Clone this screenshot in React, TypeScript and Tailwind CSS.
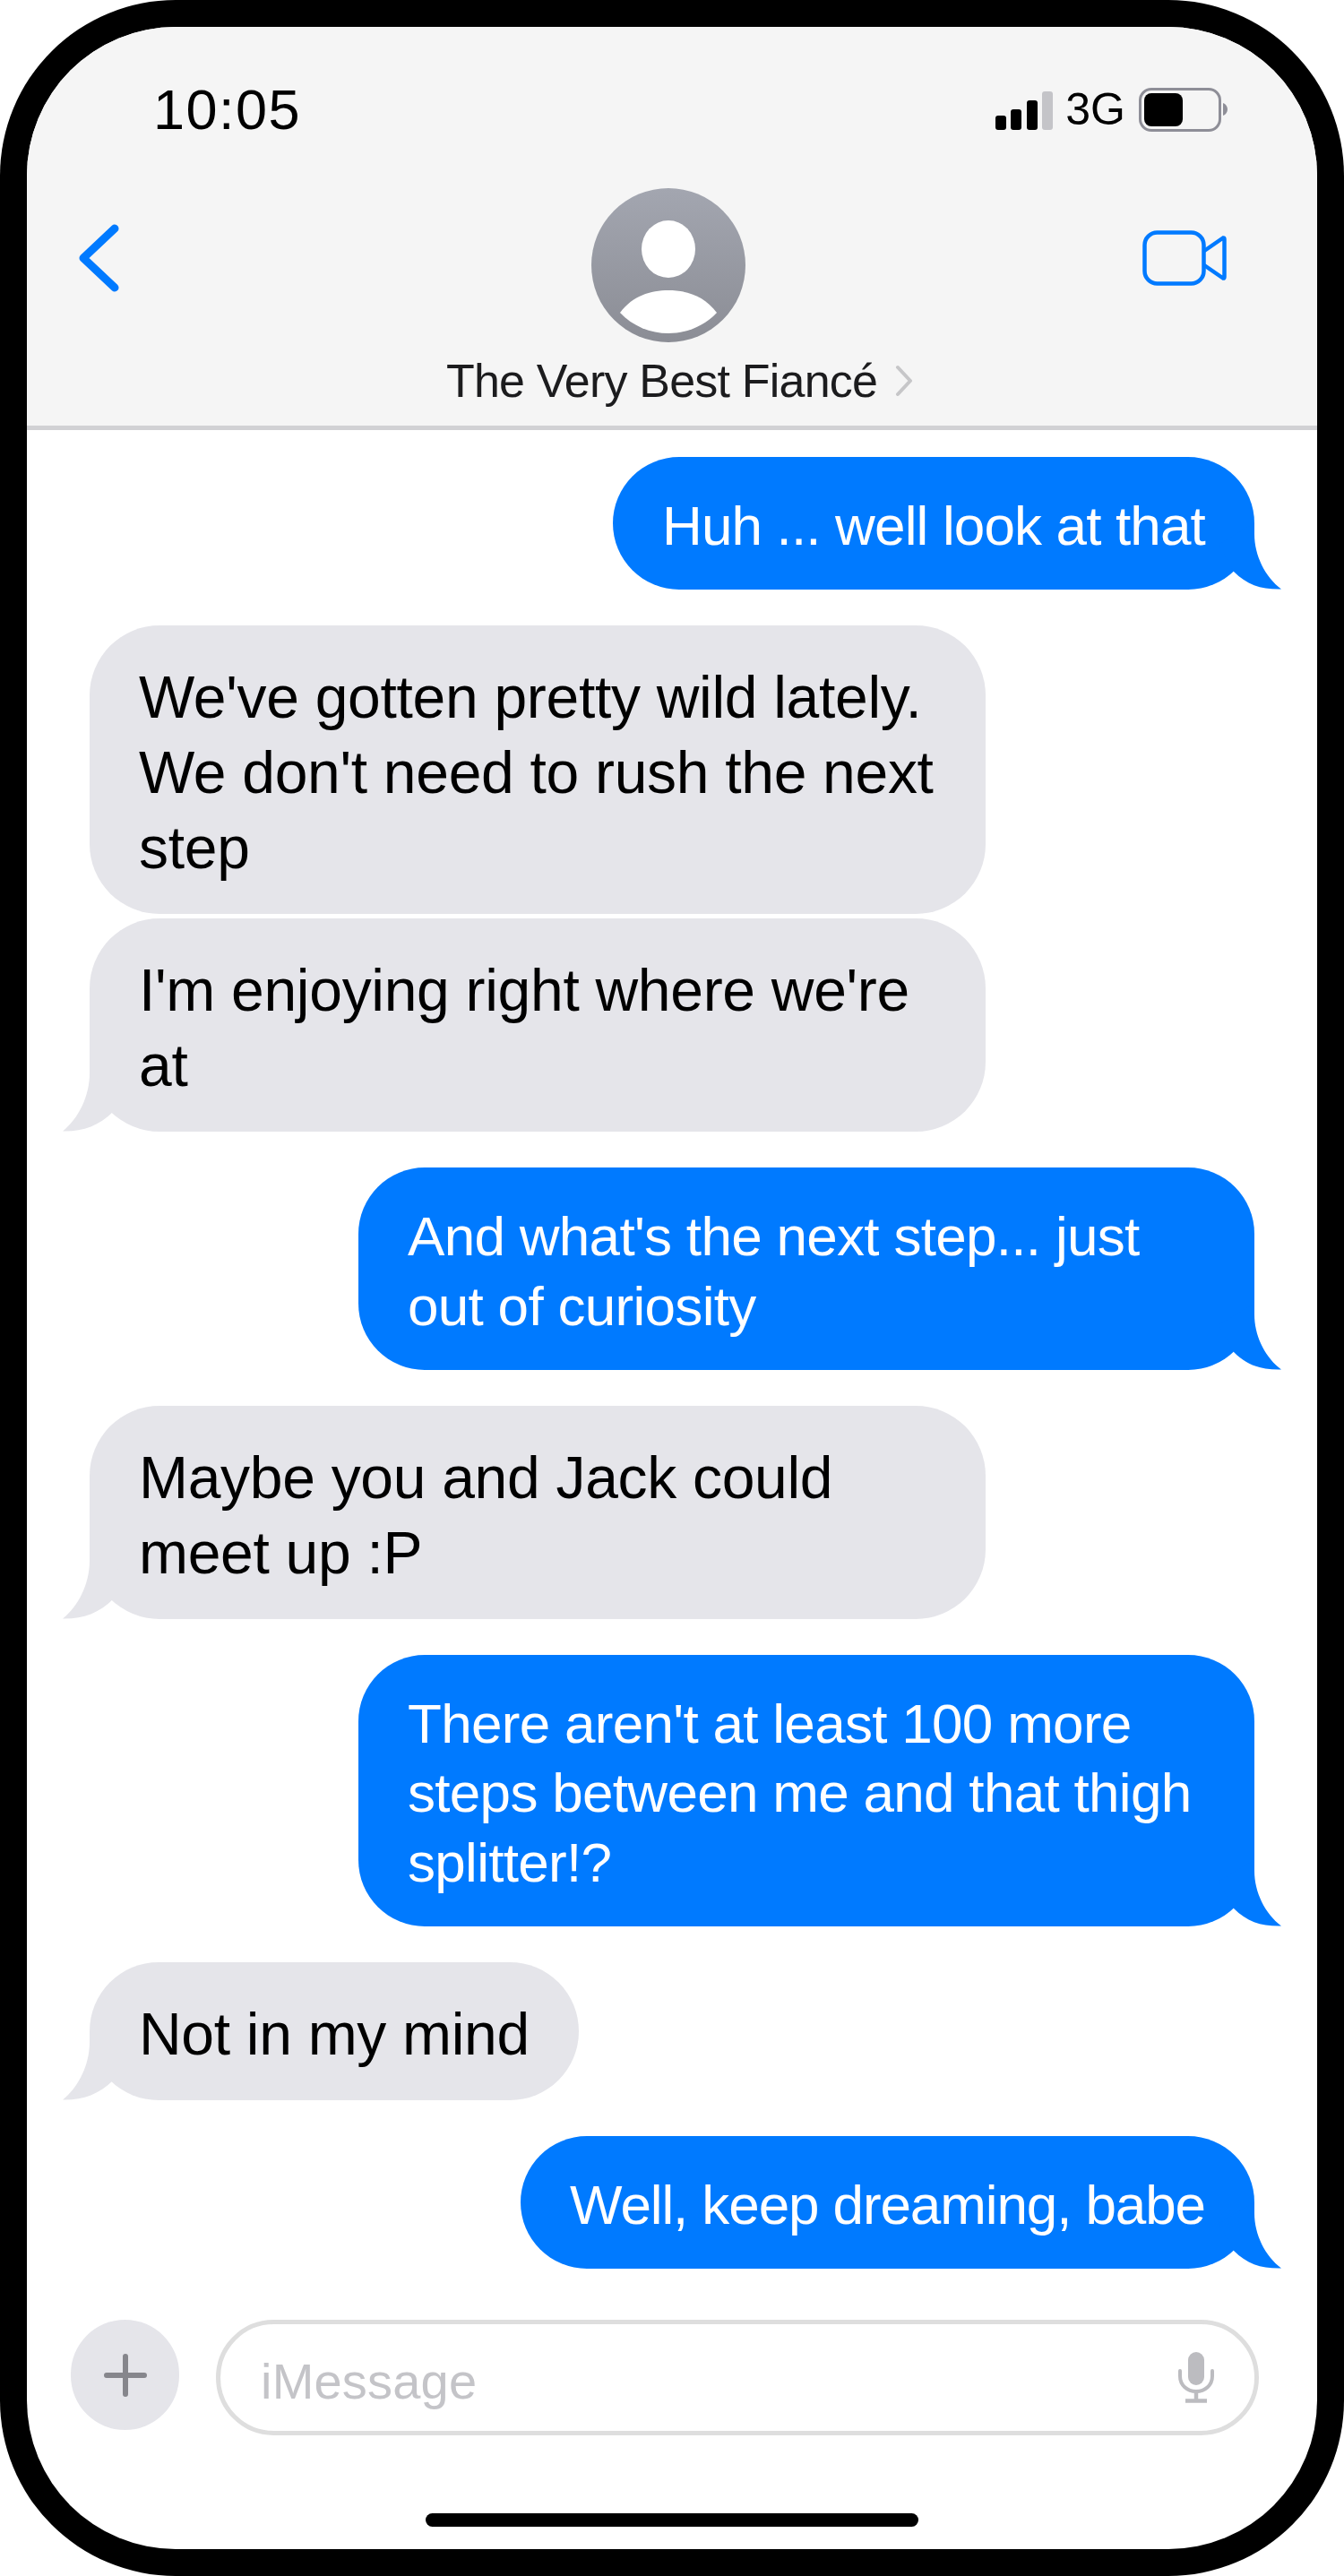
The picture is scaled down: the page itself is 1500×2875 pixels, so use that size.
import React from 'react';

interface BubbleProps {
    text: string;
    tail?: boolean;
    tracking?: string;
}

const SentBubble = ({ text, tracking = 'tracking-[-0.7px]' }: BubbleProps) => (
    <div className={`relative self-end w-fit max-w-[1000px] rounded-[74px] bg-[#007aff] px-[55px] pt-[38px] pb-[32.5px] text-[62px] leading-[77.5px] text-white ${tracking}`}>
        {text}
        <svg className="absolute bottom-0 right-[-30px]" width="80" height="90" viewBox="0 0 80 90">
            <path d="M50 16 L50 28 C50 52 62 76 80 89.5 C58 90 42 85 27 70 L10 40 Z" fill="#007aff" />
        </svg>
    </div>
);

const ReceivedBubble = ({ text, tail = true }: BubbleProps) => (
    <div className="relative w-fit max-w-[1000px] rounded-[78px] bg-[#e5e5ea] px-[55px] pt-[38px] pb-[32px] text-[66px] leading-[84px] tracking-[-0.3px] text-black">
        {text}
        {tail && (
            <svg className="absolute bottom-0 left-[-30px]" width="80" height="90" viewBox="0 0 80 90">
                <path d="M30 12 L30 25 C30 50 18 75 0 89.5 C22 90 40 84 57 67 L70 40 Z" fill="#e5e5ea" />
            </svg>
        )}
    </div>
);

const StatusIcons = () => (
    <div className="flex items-center">
        <div className="flex items-end gap-[5.5px] pt-[2px]">
            <span className="h-[16px] w-[12px] rounded-[3px] bg-black" />
            <span className="h-[23px] w-[12px] rounded-[3px] bg-black" />
            <span className="h-[33px] w-[12px] rounded-[3px] bg-black" />
            <span className="h-[43px] w-[12px] rounded-[3px] bg-[#c4c4c8]" />
        </div>
        <span className="ml-[14px] text-[50px] leading-[60px] text-black">3G</span>
        <div className="ml-[15px] flex h-[49px] w-[92px] rounded-[14px] border-[3px] border-[#8e8e97] p-[3px]">
            <span className="h-full w-[43px] rounded-[8px] bg-black" />
        </div>
        <svg className="ml-[2px]" width="5" height="14" viewBox="0 0 5 14">
            <path d="M0 0 C3 1 5 4 5 7 C5 10 3 13 0 14 Z" fill="#8e8e97" />
        </svg>
    </div>
);

const Avatar = () => (
    <svg width="172" height="172" viewBox="0 0 172 172">
        <defs>
            <linearGradient id="avatar-bg" x1="0" y1="0" x2="0" y2="1">
                <stop offset="0" stopColor="#a3a6b0" />
                <stop offset="1" stopColor="#8b8d95" />
            </linearGradient>
        </defs>
        <circle cx="86" cy="86" r="86" fill="url(#avatar-bg)" />
        <ellipse cx="86" cy="68" rx="30" ry="32" fill="#fff" />
        <path d="M32 139 C46 120 66 114 86 114 C106 114 126 120 140 139 C126 154 106 162 86 162 C66 162 46 154 32 139 Z" fill="#fff" />
    </svg>
);

export default function App() {
    return (
        <div className="h-[2875px] w-[1500px] bg-white [font-family:'Liberation_Sans',sans-serif]">
            <div className="h-full rounded-[196px] bg-black p-[30px]">
                <div className="flex h-full flex-col overflow-hidden rounded-[166px] bg-white">
                    {/* Header */}
                    <header className="h-[450px] shrink-0 border-b-[5px] border-[#d1d1d4] bg-[#f5f5f5]">
                        <div className="mt-[62px] flex h-[60px] items-center justify-between pl-[141px] pr-[100px]">
                            <span className="text-[63px] leading-[60px] tracking-[1.5px] text-black">10:05</span>
                            <StatusIcons />
                        </div>
                        <div className="mt-[58px] flex items-start pl-[58px] pr-[101px]">
                            <svg className="mt-[40px]" width="45" height="76" viewBox="0 0 45 76" fill="none" stroke="#007aff" strokeWidth="9" strokeLinecap="round" strokeLinejoin="round">
                                <path d="M40 5 L5 38 L40 71" />
                            </svg>
                            <div className="ml-[365px] flex w-[520px] flex-col">
                                <div className="ml-[162px]">
                                    <Avatar />
                                </div>
                                <div className="mt-[13px] flex items-center">
                                    <span className="whitespace-nowrap text-[52px] leading-[60px] tracking-[-0.8px] text-[#1c1c1e]">The Very Best Fiancé</span>
                                    <svg className="ml-[20px] shrink-0" width="20" height="36" viewBox="0 0 20 36" fill="none" stroke="#c6c6c8" strokeWidth="4" strokeLinecap="round" strokeLinejoin="round">
                                        <path d="M3 3 L17 18 L3 33" />
                                    </svg>
                                </div>
                            </div>
                            <svg className="ml-auto mt-[47px]" width="94" height="62" viewBox="0 0 94 62" fill="none" stroke="#007aff" strokeWidth="4.5" strokeLinejoin="round">
                                <rect x="2.5" y="2.5" width="66" height="57" rx="14" />
                                <path d="M69 23 L90 8.5 Q91.5 8 91.5 10 L91.5 52 Q91.5 54 90 53.5 L69 39" />
                            </svg>
                        </div>
                    </header>

                    {/* Messages */}
                    <div className="flex flex-col gap-[40px] px-[70px] pt-[30px]">
                        <SentBubble text="Huh ... well look at that" tracking="tracking-[-0.85px]" />
                        <div className="flex flex-col gap-[5px]">
                            <ReceivedBubble text="We've gotten pretty wild lately. We don't need to rush the next step" tail={false} />
                            <ReceivedBubble text="I'm enjoying right where we're at" />
                        </div>
                        <SentBubble text="And what's the next step... just out of curiosity" />
                        <ReceivedBubble text="Maybe you and Jack could meet up :P" />
                        <SentBubble text="There aren't at least 100 more steps between me and that thigh splitter!?" />
                        <ReceivedBubble text="Not in my mind" />
                        <SentBubble text="Well, keep dreaming, babe" tracking="tracking-[-1.1px]" />
                    </div>

                    {/* Composer */}
                    <div className="mt-auto flex items-start gap-[41px] pl-[49px] pr-[65px]">
                        <div className="flex h-[123px] w-[121px] shrink-0 items-center justify-center rounded-full bg-[#e5e5ea]">
                            <svg width="48" height="48" viewBox="0 0 48 48" stroke="#86868c" strokeWidth="6" strokeLinecap="round">
                                <path d="M24 3 L24 45 M3 24 L45 24" />
                            </svg>
                        </div>
                        <div className="flex h-[129px] flex-1 items-center justify-between rounded-full border-[5px] border-[#dedede] pl-[45px] pr-[45px]">
                            <span className="mt-[8px] text-[56px] leading-[64px] tracking-[0.2px] text-[#c4c4c8]">iMessage</span>
                            <svg width="40" height="57" viewBox="0 0 40 57" fill="none">
                                <rect x="11" y="0" width="18" height="37" rx="9" fill="#bcbcc0" />
                                <path d="M2 21 V27 C2 37 10 44 20 44 C30 44 38 37 38 27 V21" stroke="#bcbcc0" strokeWidth="4" strokeLinecap="round" />
                                <path d="M20 44 V54 M8 54.5 H32" stroke="#bcbcc0" strokeWidth="4.5" />
                            </svg>
                        </div>
                    </div>
                    <div className="mb-[25px] mt-[87px] h-[15px] w-[550px] shrink-0 self-center rounded-full bg-black" />
                </div>
            </div>
        </div>
    );
}
